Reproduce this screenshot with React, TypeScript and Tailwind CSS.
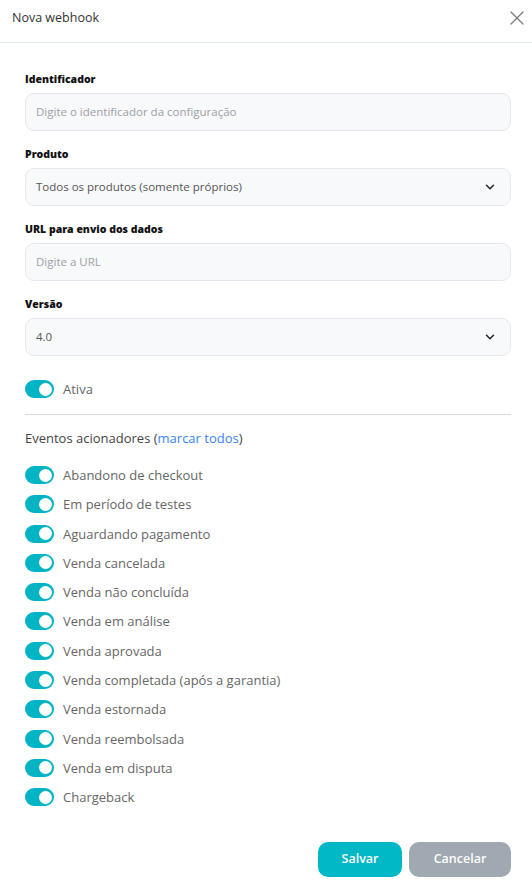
import React, { useState } from 'react';
import { X, ChevronDown } from 'lucide-react';

const eventos = [
  'Abandono de checkout',
  'Em período de testes',
  'Aguardando pagamento',
  'Venda cancelada',
  'Venda não concluída',
  'Venda em análise',
  'Venda aprovada',
  'Venda completada (após a garantia)',
  'Venda estornada',
  'Venda reembolsada',
  'Venda em disputa',
  'Chargeback',
];

const Toggle: React.FC<{ on: boolean; onClick: () => void }> = ({ on, onClick }) => (
  <button
    onClick={onClick}
    className={`relative w-[29px] h-[18px] rounded-full shrink-0 transition-colors ${on ? 'bg-[#00b4c3]' : 'bg-gray-300'}`}
  >
    <span
      className={`absolute top-[2.5px] w-[13px] h-[13px] rounded-full bg-white transition-all ${on ? 'left-[13.5px]' : 'left-[2.5px]'}`}
    />
  </button>
);

const Field: React.FC<{ label: string; children: React.ReactNode }> = ({ label, children }) => (
  <div>
    <label className="block text-[10.5px] font-extrabold text-[#111] mb-[5px] leading-[18px]">{label}</label>
    {children}
  </div>
);

const boxClass =
  'w-full h-[38px] px-[10px] rounded-[9px] bg-[#f8f9fb] border border-[#e4e8ee] text-[11.5px] flex items-center justify-between';

export default function App() {
  const [ativa, setAtiva] = useState(true);
  const [ev, setEv] = useState<boolean[]>(eventos.map(() => true));

  return (
    <div className="w-[532px] h-[894px] overflow-hidden bg-white" style={{ fontFamily: '"Open Sans", "Noto Sans", sans-serif' }}>
      {/* HEADER */}
      <div className="h-[43px] flex items-start justify-between pl-[12px] pr-[3px] pt-[9px] border-b border-[#dde5ee]">
        <span className="text-[12.5px] leading-[18px] text-[#333]">Nova webhook</span>
        <X size={24} strokeWidth={1.2} className="text-[#777] -mt-[3px]" />
      </div>

      <div className="pl-[25px] pr-[21px] pt-[27px]">
        <div className="flex flex-col gap-[14px]">
          <Field label="Identificador">
            <div className={boxClass}>
              <span className="text-[#9ca0a6]">Digite o identificador da configuração</span>
            </div>
          </Field>
          <Field label="Produto">
            <div className={boxClass}>
              <span className="text-[#555]">Todos os produtos (somente próprios)</span>
              <ChevronDown size={14} strokeWidth={2.5} className="text-[#222] mr-[3px]" />
            </div>
          </Field>
          <Field label="URL para envio dos dados">
            <div className={boxClass}>
              <span className="text-[#9ca0a6]">Digite a URL</span>
            </div>
          </Field>
          <Field label="Versão">
            <div className={boxClass}>
              <span className="text-[#555]">4.0</span>
              <ChevronDown size={14} strokeWidth={2.5} className="text-[#222] mr-[3px]" />
            </div>
          </Field>
        </div>

        <div className="flex items-center gap-[9px] mt-[24px]">
          <Toggle on={ativa} onClick={() => setAtiva(!ativa)} />
          <span className="text-[13px] leading-[18px] text-[#666]">Ativa</span>
        </div>

        <div className="h-px bg-[#dcdcdc] mt-[16px]" />

        <p className="text-[13px] leading-[18px] text-[#444] mt-[14px]">
          Eventos acionadores (
          <button onClick={() => setEv(eventos.map(() => true))} className="text-[#3b82f6]">
            marcar todos
          </button>
          )
        </p>

        <div className="flex flex-col gap-[11.3px] mt-[19px]">
          {eventos.map((e, i) => (
            <div key={e} className="flex items-center gap-[9px]">
              <Toggle on={ev[i]} onClick={() => setEv(ev.map((v, j) => (j === i ? !v : v)))} />
              <span className="text-[13px] text-[#666] leading-[18px]">{e}</span>
            </div>
          ))}
        </div>

        <div className="flex justify-end gap-[7px] mt-[36px]">
          <button className="w-[84px] h-[35px] rounded-[10px] bg-[#00b8c6] text-white text-[12.5px] font-semibold">
            Salvar
          </button>
          <button className="w-[102px] h-[35px] rounded-[10px] bg-[#a0a8b1] text-white text-[12.5px] font-semibold">
            Cancelar
          </button>
        </div>
      </div>
    </div>
  );
}
